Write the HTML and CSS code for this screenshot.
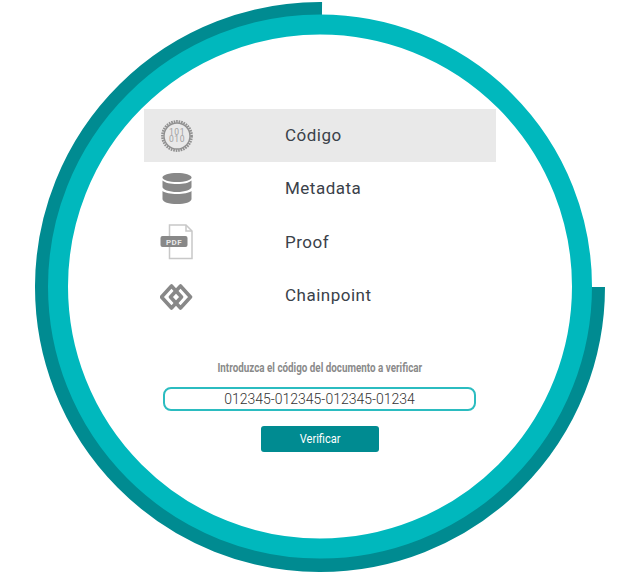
FILE: index.html
```html
<!DOCTYPE html>
<html lang="es">
<head>
<meta charset="utf-8">
<title>Verificar</title>
<link rel="stylesheet" href="styles.css">
</head>
<body>
<svg class="rings" width="640" height="574" viewBox="0 0 640 574" aria-hidden="true">
  <path class="ring-dark" d="M322 11 A276 276 0 1 0 596 287"/>
  <circle class="ring-light" cx="320" cy="286.5" r="262"/>
</svg>
<main class="panel">
  <ul class="menu">
    <li class="item raised active">
      <svg class="icon" width="34" height="34" viewBox="0 0 34 34">
        <circle class="gear" cx="17" cy="17" r="14.6"/>
        <circle class="gear-in" cx="17" cy="17" r="13"/>
        <text class="bin" x="17"><tspan x="17" y="15.8">101</tspan><tspan x="17" y="23">010</tspan></text>
      </svg>
      <span>Código</span>
    </li>
    <li class="item raised">
      <svg class="icon" width="34" height="34" viewBox="0 0 34 34">
        <path class="fill" d="M2.500 5.500C2.500 2.800 9 1 17 1s14.500 1.800 14.500 4.500S25 10 17 10 2.500 8.200 2.500 5.500Z"/>
        <path class="fill" d="M2.500 8.500C5 11 10.500 12 17 12s12-1 14.500-3.500V15c0 2.500-6.500 5-14.500 5S2.500 17.500 2.500 15Z"/>
        <path class="fill" d="M2.500 19C5 21 10.500 22 17 22s12-1 14.500-3v8c0 3-6.500 5-14.500 5S2.500 30 2.500 27Z"/>
      </svg>
      <span>Metadata</span>
    </li>
    <li class="item">
      <svg class="icon" width="34" height="36" viewBox="0 0 34 36">
        <path class="page" d="M9.500 1H26l6 6v27.500H9.500Z"/>
        <path class="page" d="M26 1v6h6"/>
        <rect class="fill" x="0.500" y="12" width="27" height="11" rx="2"/>
        <text class="pdf" x="14" y="20.600">PDF</text>
      </svg>
      <span>Proof</span>
    </li>
    <li class="item">
      <svg class="icon" width="34" height="30" viewBox="0 0 34 30">
        <path class="chain" d="M11.500 6 1.500 17l10 11 10-11Z"/>
        <path class="chain" d="M20.500 6 10.500 17l10 11 10-11Z"/>
      </svg>
      <span>Chainpoint</span>
    </li>
  </ul>
  <form class="verify">
    <label class="hint" for="code">Introduzca el código del documento a verificar</label>
    <input class="code" id="code" type="text" value="012345-012345-012345-01234">
    <button class="submit" type="button"><span class="submit-label">Verificar</span></button>
  </form>
</main>
</body>
</html>
```
FILE: styles.css
```css
html, body {
  margin: 0;
  padding: 0;
  background: #fff;
}
body {
  position: relative;
  width: 640px;
  height: 574px;
  overflow: hidden;
  font-family: Roboto, "Liberation Sans", sans-serif;
}
.rings {
  position: absolute;
  top: 0;
  left: 0;
}
.ring-dark {
  fill: none;
  stroke: #008b91;
  stroke-width: 18;
}
.ring-light {
  fill: #fff;
  stroke: #00b8bd;
  stroke-width: 20;
}
.panel {
  position: relative;
  width: 352px;
  margin-left: 144px;
  padding-top: 109px;
  box-sizing: border-box;
}
.menu {
  list-style: none;
  margin: 0;
  padding: 0;
}
.item {
  display: grid;
  grid-template-columns: 66px 1fr;
  align-items: center;
  column-gap: 75px;
  height: 53px;
  font-size: 17px;
  letter-spacing: 0.5px;
  color: #3a4149;
}
.item.raised span {
  margin-bottom: 2px;
}
.item.active {
  background: #e9e9e9;
}
.icon {
  justify-self: center;
}
.fill { fill: #888; }
.gear {
  fill: none;
  stroke: #909090;
  stroke-width: 2.6;
  stroke-dasharray: 1.6 0.9;
}
.gear-in {
  fill: none;
  stroke: #909090;
  stroke-width: 1.4;
}
.bin {
  font-size: 8.5px;
  fill: #a0a0a0;
  text-anchor: middle;
}
.page {
  fill: none;
  stroke: #c8c8c8;
  stroke-width: 1.5;
}
.pdf {
  font-size: 8px;
  font-weight: 700;
  fill: #e8e8e8;
  text-anchor: middle;
}
.chain {
  fill: none;
  stroke: #888;
  stroke-width: 3.6;
  stroke-linejoin: round;
}
.verify {
  display: flex;
  flex-direction: column;
  align-items: center;
  margin-top: 39px;
}
.hint {
  font-size: 12px;
  font-weight: 700;
  color: #8a8a8a;
  line-height: 16px;
  transform: scaleX(0.82);
  white-space: nowrap;
}
.code {
  box-sizing: border-box;
  width: 313px;
  height: 24px;
  margin-top: 11px;
  margin-left: -1px;
  padding: 0 8px;
  border: 2px solid #2bbcc0;
  border-radius: 8px;
  background: #fff;
  font-family: Roboto, sans-serif;
  font-size: 14px;
  font-weight: 300;
  color: #333;
  text-align: center;
  outline: none;
}
.submit {
  width: 118px;
  height: 26px;
  margin-top: 15px;
  padding: 0;
  border: 0;
  border-radius: 3px;
  background: #008b91;
  color: #fff;
  font-family: Roboto, sans-serif;
  font-size: 12px;
}
.submit-label {
  display: inline-block;
  transform: scaleX(0.92);
}
```
